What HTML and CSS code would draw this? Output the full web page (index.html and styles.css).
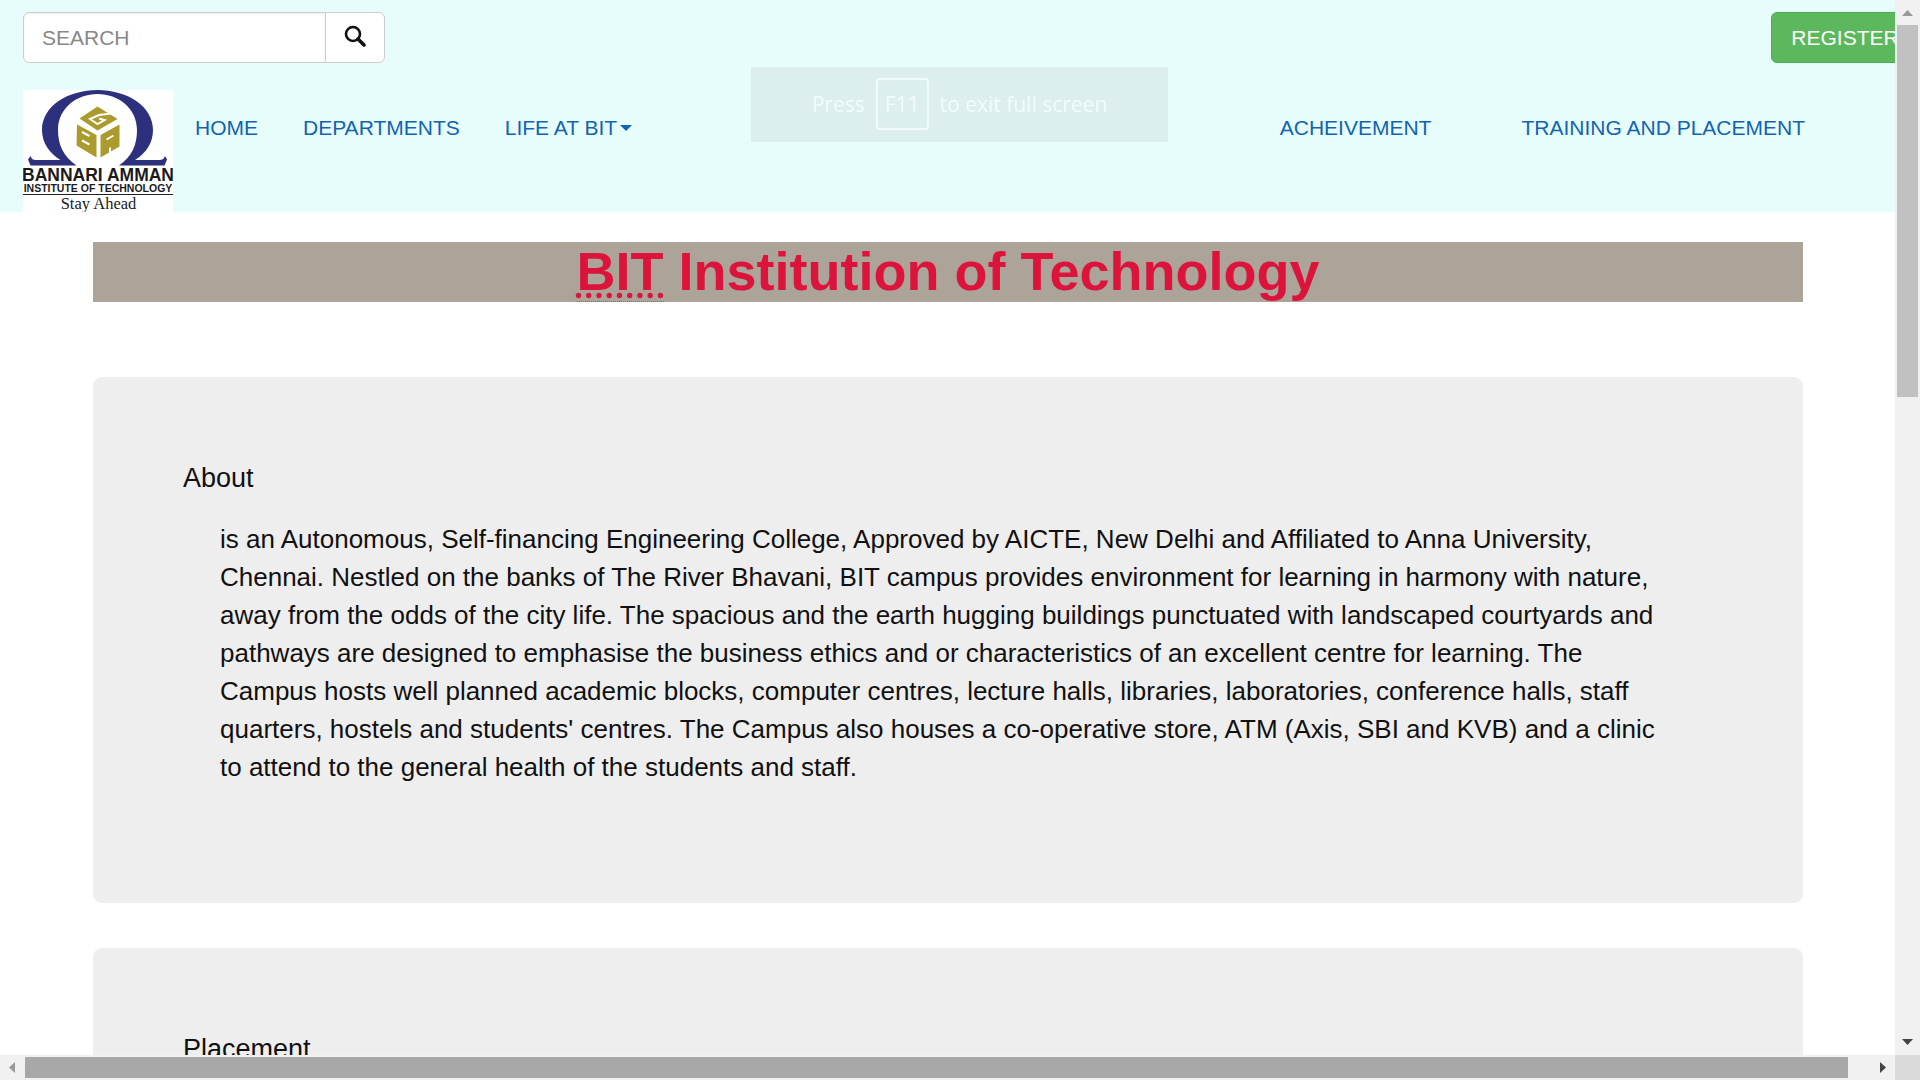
FILE: index.html
```html
<!DOCTYPE html>
<html lang="en">
<head>
<meta charset="utf-8">
<title>BIT Institution of Technology</title>
<link rel="stylesheet" href="styles.css">
</head>
<body>
<div class="window">
  <div class="page">
    <header class="header">
      <div class="toolbar">
        <form class="search" role="search">
          <input class="search-input" type="text" placeholder="SEARCH" aria-label="Search">
          <button class="search-button" type="button" aria-label="Submit search">
            <svg class="search-icon" viewBox="0 0 22 22" aria-hidden="true">
              <circle cx="9" cy="9" r="7" fill="none" stroke="#111" stroke-width="2.600"/>
              <path d="M14 14L20 20" stroke="#111" stroke-width="3.600" stroke-linecap="round"/>
            </svg>
          </button>
        </form>
        <button class="register" type="button">REGISTER</button>
      </div>
      <nav class="nav">
        <a class="logo" href="#" aria-label="Bannari Amman Institute of Technology">
          <svg class="logo-art" viewBox="0 0 300 244">
            <rect width="300" height="244" fill="#fff"/>
            <path fill="#2d317d" d="M15 151L10 139L15 132C18 139 20 140 27 140H75C52 126 38 105 38 80C38 32 90 0 149 0S260 32 260 80C260 105 247 126 224 140H272C279 140 281 139 284 132L288 139L283 151H192C218 133 228 110 228 80C228 36 190 8 149 8S70 36 70 80C70 110 81 133 107 151Z"/>
            <g fill="#ab9b2c">
              <path d="M149 33L113 57L149 81L189 58Z"/>
              <path d="M108 69L147 90V135L107 111Z"/>
              <path d="M155 90L193 69V113L155 135Z"/>
            </g>
            <g fill="none" stroke="#fff" stroke-width="4">
              <path d="M176 47L152 50L134 58L149 68L163 60L152 57"/>
              <path d="M118 84L133 92M118 101L133 109"/>
              <path d="M167 99L181 91M174 115V130"/>
            </g>
            <text class="logo-name" x="150" y="181" text-anchor="middle">BANNARI AMMAN</text>
            <text class="logo-sub" x="150" y="204" text-anchor="middle">INSTITUTE OF TECHNOLOGY</text>
            <path d="M0 209H300" stroke="#222" stroke-width="2"/>
            <text class="logo-motto" x="151" y="237" text-anchor="middle">Stay Ahead</text>
          </svg>
        </a>
        <ul class="menu">
          <li><a href="#">HOME</a></li>
          <li><a href="#">DEPARTMENTS</a></li>
          <li><a class="has-caret" href="#">LIFE AT BIT</a></li>
        </ul>
        <ul class="menu menu-right">
          <li><a href="#">ACHEIVEMENT</a></li>
          <li><a href="#">TRAINING AND PLACEMENT</a></li>
        </ul>
      </nav>
    </header>
    <main class="content">
      <h1 class="title"><abbr title="Bannari Amman Institute of Technology">BIT</abbr> Institution of Technology</h1>
      <section class="panel">
        <h2 class="panel-title">About</h2>
        <blockquote class="panel-text">is an Autonomous, Self-financing Engineering College, Approved by AICTE, New Delhi and Affiliated to Anna University, Chennai. Nestled on the banks of The River Bhavani, BIT campus provides environment for learning in harmony with nature, away from the odds of the city life. The spacious and the earth hugging buildings punctuated with landscaped courtyards and pathways are designed to emphasise the business ethics and or characteristics of an excellent centre for learning. The Campus hosts well planned academic blocks, computer centres, lecture halls, libraries, laboratories, conference halls, staff quarters, hostels and students' centres. The Campus also houses a co-operative store, ATM (Axis, SBI and KVB) and a clinic to attend to the general health of the students and staff.</blockquote>
      </section>
      <section class="panel">
        <h2 class="panel-title">Placement</h2>
      </section>
    </main>
  </div>
  <div class="bar bar-vertical" aria-hidden="true">
    <svg class="arrow arrow-dim" viewBox="0 0 25 25"><path d="M7 16H18L12.500 10Z"/></svg>
    <div class="track"><div class="thumb"></div></div>
    <svg class="arrow" viewBox="0 0 25 25"><path d="M7 9H18L12.500 15Z"/></svg>
  </div>
  <div class="bar bar-horizontal" aria-hidden="true">
    <svg class="arrow arrow-dim" viewBox="0 0 25 25"><path d="M15 7V18L9 12.500Z"/></svg>
    <div class="track"><div class="thumb"></div></div>
    <svg class="arrow" viewBox="0 0 25 25"><path d="M10 7V18L16 12.500Z"/></svg>
  </div>
  <div class="corner" aria-hidden="true"></div>
  <div class="fullscreen-hint">Press <kbd>F11</kbd> to exit full screen</div>
</div>
</body>
</html>
```
FILE: styles.css
```css
* { box-sizing: border-box; }

body {
  margin: 0;
  background: #fff;
  color: #111;
  font-family: "Liberation Sans", Arial, sans-serif;
  font-size: 21px;
  line-height: 30px;
}

.window {
  position: relative;
  display: grid;
  grid-template-columns: minmax(0, 1fr) 25px;
  grid-template-rows: minmax(0, 1fr) 25px;
  height: 100vh;
  overflow: hidden;
}

.page { overflow: hidden; }

/* Header */
.header {
  padding: 12px 0 0 23px;
  background: #e7fdfc;
  overflow: hidden;
}

.toolbar {
  display: flex;
  justify-content: space-between;
  margin-right: -24px;
}

.search { display: flex; }

.search-input {
  width: 303px;
  height: 51px;
  padding: 0 18px;
  border: 1px solid #ccc;
  border-radius: 6px 0 0 6px;
  background: #fff;
  box-shadow: inset 0 1px 2px rgba(0, 0, 0, 0.08);
  color: #555;
  font: inherit;
}

.search-input::placeholder { color: #888; opacity: 1; }

.search-button {
  display: flex;
  align-items: center;
  justify-content: center;
  width: 60px;
  margin-left: -1px;
  padding: 0 0 4px;
  border: 1px solid #ccc;
  border-radius: 0 6px 6px 0;
  background: #fff;
}

.search-icon { width: 22px; height: 22px; }

.register {
  width: 148px;
  height: 51px;
  padding: 0;
  border: 1px solid #4cae4c;
  border-radius: 6px;
  background: #5cb85c;
  color: #fff;
  font: inherit;
}

.nav {
  display: flex;
  align-items: flex-start;
  margin-top: 27px;
}

.logo { display: block; width: 150px; height: 122px; }
.logo-art { display: block; width: 100%; height: 100%; }
.logo-name { font: bold 35px "Liberation Sans", Arial, sans-serif; fill: #1c1a1b; }
.logo-sub { font: bold 21px "Liberation Sans", Arial, sans-serif; fill: #1c1a1b; }
.logo-motto { font: 33px "Liberation Serif", "Times New Roman", serif; fill: #1c1a1b; }

.menu {
  display: flex;
  gap: 45px;
  margin: 0;
  padding: 23px 22px;
  list-style: none;
}

.menu-right { gap: 90px; margin-left: auto; padding-right: 90px; }

.menu a { color: #1264b0; text-decoration: none; white-space: nowrap; }

.has-caret { display: flex; align-items: center; gap: 3px; }

.has-caret::after {
  content: "";
  border: 6px solid transparent;
  border-top-color: currentColor;
  border-bottom: 0;
}

/* Content */
.content { padding: 30px 92px 0 93px; }

.title {
  margin: 0 0 75px;
  padding-bottom: 2px;
  background: #aca498;
  color: #dc143c;
  font-size: 54px;
  line-height: 58px;
  text-align: center;
}

.title abbr {
  border-bottom: 1px dotted #777;
  text-decoration: underline dotted;
}

.panel {
  min-height: 526px;
  margin-bottom: 45px;
  padding: 85px 90px 84px;
  border-radius: 9px;
  background: #eee;
}

.panel-title {
  margin: 0;
  font-size: 27px;
  font-weight: normal;
  line-height: 32px;
}

.panel-text {
  margin: 26px 0 0;
  padding: 0 36px 0 37px;
  font-size: 26px;
  line-height: 38px;
}

/* Scroll bars */
.bar { display: flex; background: #f1f1f1; }
.bar-vertical { flex-direction: column; }
.track { flex: 1; }
.arrow { flex: none; width: 25px; height: 25px; fill: #444; }
.arrow-dim { fill: #999; }

.bar-vertical .thumb { height: 37%; margin: 0 2px; background: #c1c1c1; }
.bar-vertical { grid-area: 1 / 2; }
.bar-horizontal { grid-area: 2 / 1; }
.bar-horizontal .thumb { width: 98.8%; height: 21px; margin: 2px 0; background: #a8a8a8; }
.corner { grid-area: 2 / 2; background: #dadada; }

/* Full screen notice, over the page */
.fullscreen-hint {
  position: absolute;
  top: 67px;
  left: 50%;
  display: flex;
  align-items: center;
  justify-content: center;
  gap: 11px;
  width: 417px;
  height: 75px;
  margin-left: -209px;
  padding-bottom: 2px;
  background: #dceeed;
  color: #f0fdfc;
  font-family: "Open Sans", "Noto Sans", sans-serif;
  font-size: 21px;
}

.fullscreen-hint kbd {
  padding: 9px 7px;
  border: 2px solid #f0fdfc;
  border-radius: 4px;
  font: inherit;
}
```
